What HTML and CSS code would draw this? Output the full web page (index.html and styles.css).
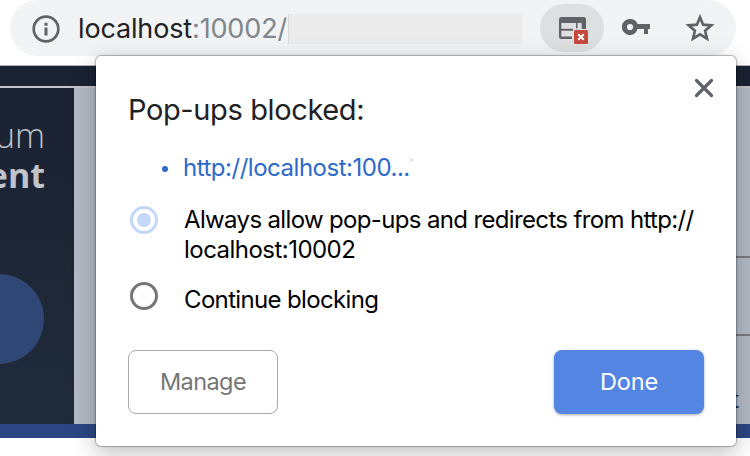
FILE: index.html
```html
<!DOCTYPE html>
<html lang="en">
<head>
<meta charset="utf-8">
<title>Pop-ups blocked</title>
<link rel="stylesheet" href="styles.css">
</head>
<body>
<header class="toolbar">
  <div class="omnibox">
    <svg class="info" width="28" height="28" viewBox="0 0 28 28"><circle cx="14" cy="14" r="12.3" fill="none" stroke="#5f6368" stroke-width="2.7"/><path fill="#5f6368" d="M12.5 7.7h3v3h-3zM12.5 12.6h3v8h-3z"/></svg>
    <div class="url"><span class="host">localhost</span><span class="port">:10002/</span></div>
    <span class="redacted"></span>
    <div class="blocked-chip">
      <svg width="64" height="48" viewBox="0 0 64 48"><path fill="#5f6368" fill-rule="evenodd" d="M21.5 13h22q2.5 0 2.5 2.5V27h-3v-8H21.3v13.5H32V35H21.5Q19 35 19 32.5v-17Q19 13 21.5 13z"/><path fill="#5f6368" d="M21 24.7h12v2H21zM36 19h1.5v5.5H36zM41.7 19h1.5v8h-1.5z"/><rect x="34" y="26" width="14" height="14" rx="1.5" fill="#c5483f" stroke="#dedfe1" stroke-width="2" paint-order="stroke"/><path d="M38.2 30.2l5.6 5.6M43.8 30.2l-5.6 5.6" stroke="#fff" stroke-width="2"/></svg>
    </div>
    <svg class="key" width="28" height="18" viewBox="0 0 28 18"><path fill="#5f6368" fill-rule="evenodd" d="M8 1a8 8 0 0 1 7.6 5H28v5h-2v5h-4v-5h-6.4A8 8 0 1 1 8 1zm0 4.9a3.1 3.1 0 1 0 0 6.2 3.1 3.1 0 0 0 0-6.2z"/></svg>
    <svg class="star" width="30" height="30" viewBox="0 0 30 30"><path fill="none" stroke="#5f6368" stroke-width="2.7" d="M15 4.2l3.1 7.5 8.2.7-6.2 5.3 1.9 8-7-4.3-7 4.3 1.9-8-6.2-5.3 8.2-.7z"/></svg>
  </div>
</header>
<main class="page">
  <div class="topbar"></div>
  <div class="content">
    <aside class="side">
      <div class="brand"><span class="thin">um</span><span class="bold">ent</span></div>
      <div class="disc"></div>
    </aside>
    <section class="form">
      <div class="field"></div>
      <div class="label">t</div>
    </section>
  </div>
  <div class="footer"></div>
</main>
<div class="popup">
  <svg class="close" width="20" height="20" viewBox="0 0 20 20"><path d="M2.5 2.5l15 15M17.5 2.5l-15 15" stroke="#5f6368" stroke-width="3.2" stroke-linecap="round"/></svg>
  <h1>Pop-ups blocked:</h1>
  <div class="link-row"><span class="dot"></span><a>http://localhost:100...</a><span class="tick"></span></div>
  <div class="option first"><span class="radio on"></span><p><span class="line1">Always allow pop-ups and redirects from http://</span><br><span class="line2">localhost:10002</span></p></div>
  <div class="option second"><span class="radio"></span><p>Continue blocking</p></div>
  <div class="actions"><button class="manage">Manage</button><button class="done">Done</button></div>
</div>
</body>
</html>
```
FILE: styles.css
```css
* { box-sizing: border-box; }
body { margin: 0; width: 750px; height: 456px; overflow: hidden; position: relative; background: #fff; font-family: Inter, "Liberation Sans", sans-serif; }
.toolbar { height: 66px; padding: 0 14px 0 10px; border-bottom: 1px solid #b5b5b7; }
.omnibox { display: flex; align-items: center; height: 56px; padding-left: 22px; border-radius: 28px; background: #f1f3f4; }
.info { flex: none; margin-top: 1px; }
.url { width: 210px; flex: none; margin-left: 18px; padding-top: 1px; font-size: 27px; line-height: 34px; letter-spacing: -0.15px; white-space: nowrap; }
.host { color: #202124; }
.port { color: #80868b; }
.redacted { flex: none; width: 234px; height: 30px; margin-top: 1px; background: #ebebeb; border-left: 1px solid #d5d7d8; }
.blocked-chip { flex: none; width: 64px; height: 48px; margin-left: 18px; border-radius: 24px; background: #dedfe1; }
.key { flex: none; margin-left: 18px; margin-top: -2px; }
.star { flex: none; margin-left: 35px; margin-top: -1px; }
.page { height: 372px; display: flex; flex-direction: column; }
.topbar { flex: none; height: 20px; background: #1a2233; }
.content { flex: 1; display: flex; border-top: 2px solid #c1c4c9; background: #b4bac5; }
.side { width: 74px; height: 336px; overflow: hidden; padding-top: 27px; background: linear-gradient(#1b2233, #1d2736 50%, #1f2a3b); }
.brand { display: flex; flex-direction: column; align-items: flex-end; width: 45px; height: 159px; color: #c0c3ca; font: 300 34px/40px "Open Sans", sans-serif; }
.bold { font-weight: 700; }
.disc { width: 90px; height: 90px; margin-left: -46px; border-radius: 50%; background: #304775; }
.form { flex: 1; padding: 168px 0 0 650px; }
.field { height: 80px; border: solid #797c82; border-width: 2px 0; }
.label { width: 16px; margin-top: 50px; margin-left: 8px; font: 24px/28px "Liberation Sans", sans-serif; color: #202633; }
.footer { flex: none; height: 14px; background: #2b4682; }
.popup { position: absolute; left: 96px; top: 56px; width: 640px; height: 390px; padding: 33px 32px 0; border-radius: 5px; background: #fff; box-shadow: 0 0 1px 1px rgba(0,0,0,.28), 0 7px 24px rgba(0,0,0,.26); }
.close { position: absolute; right: 22px; top: 22px; }
h1 { margin: 0; font-size: 29px; line-height: 42px; font-weight: 400; letter-spacing: -0.38px; color: #202124; white-space: nowrap; }
.link-row { display: flex; align-items: center; height: 30px; margin-top: 21px; padding-left: 34px; font-size: 24px; letter-spacing: -0.48px; color: #2d69cc; white-space: nowrap; }
.dot { width: 6px; height: 6px; margin-right: 15px; margin-top: 3px; border-radius: 50%; background: currentColor; }
.tick { align-self: flex-start; width: 1px; height: 2px; margin: 7px 0 0 1px; background: #9dbbe9; }
.option { display: flex; align-items: flex-start; padding-left: 2px; }
.first { margin-top: 23px; }
.second { margin-top: 20px; }
.radio { flex: none; width: 28px; height: 28px; border: 3px solid #757575; border-radius: 50%; }
.first .radio { margin-top: 1px; }
.second .radio { margin-top: -3px; }
.on { display: grid; place-items: center; border-color: #c3d8fb; }
.on::after { content: ""; width: 14px; height: 14px; border-radius: 50%; background: #c3d8fb; }
p { margin: 0 0 0 26px; font-size: 24px; line-height: 30px; letter-spacing: -0.65px; color: #000; white-space: nowrap; }
.line2 { letter-spacing: -0.53px; }
.actions { display: flex; justify-content: space-between; margin-top: 35px; }
button { width: 150px; height: 64px; padding: 0 0 1px; border: 1px solid #a9a9a9; border-radius: 8px; background: #fff; font: 400 23.5px/30px Inter, sans-serif; color: #757575; letter-spacing: -0.6px; }
.done { border: 0; background: #5585e3; color: #fff; letter-spacing: -0.2px; box-shadow: 0 1px 3px rgba(0,0,0,.35); }
```
